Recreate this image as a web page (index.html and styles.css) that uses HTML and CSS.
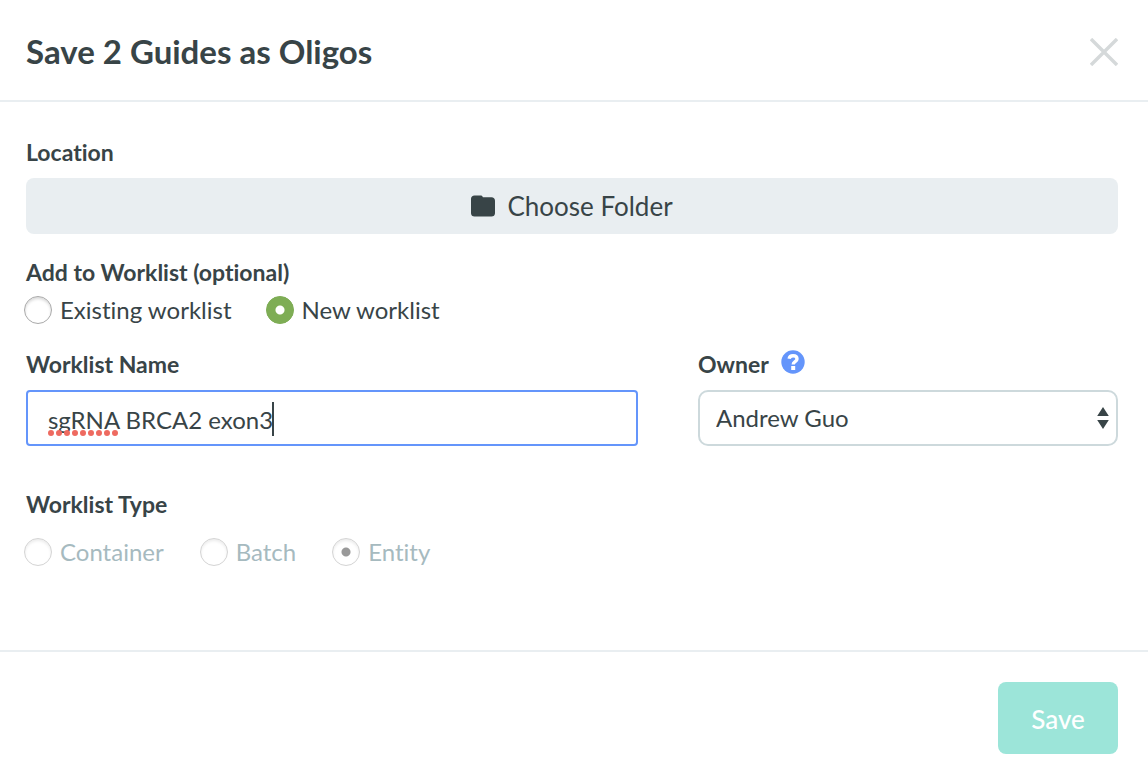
FILE: index.html
```html
<!DOCTYPE html>
<html lang="en">
<head>
<meta charset="utf-8">
<meta name="viewport" content="width=device-width, initial-scale=1">
<title>Save 2 Guides as Oligos</title>
<link rel="stylesheet" href="styles.css">
</head>
<body>
<form class="dialog">
  <header class="dialog-header">
    <h1 class="dialog-title">Save 2 Guides as Oligos</h1>
    <button class="close-button" type="button" aria-label="Close">
      <svg class="close-icon" viewBox="0 0 28 28" aria-hidden="true"><path d="M1 1 27 27M27 1 1 27" fill="none" stroke="#d5d9da" stroke-width="3.4"/></svg>
    </button>
  </header>
  <main class="dialog-body">
    <section class="location">
      <label class="label" for="folder">Location</label>
      <button class="folder-button" id="folder" type="button">
        <svg class="folder-icon" viewBox="0 0 24 22" aria-hidden="true"><path d="M3.500.5h6.200c1 0 1.800.6 2.200 1.800h8.600C22.600 2.300 24 3.700 24 5.800V18.200c0 2-1.400 3.300-3.500 3.300h-17C1.400 21.500 0 20.200 0 18.200V3.800C0 1.800 1.400.5 3.500.5Z" fill="#384447"/></svg>
        <span>Choose Folder</span>
      </button>
    </section>
    <fieldset class="group worklist">
      <legend class="label">Add to Worklist (optional)</legend>
      <div class="options options-wide">
        <label class="option"><input class="radio" type="radio" name="worklist"><span>Existing worklist</span></label>
        <label class="option"><input class="radio" type="radio" name="worklist" checked><span>New worklist</span></label>
      </div>
    </fieldset>
    <div class="fields">
      <div class="field">
        <label class="label" for="name">Worklist Name</label>
        <div class="name-box">
          <input class="control text-input" id="name" type="text" value="sgRNA BRCA2 exon3" spellcheck="false">
          <svg class="spelling" viewBox="0 0 70 6" aria-hidden="true"><path d="M3 3h65" stroke="#ee6a60" stroke-width="6" stroke-linecap="round" stroke-dasharray="0 8"/></svg>
          <span class="caret"></span>
        </div>
      </div>
      <div class="field">
        <div class="label-row">
          <label class="label" for="owner">Owner</label>
          <button class="help-button" type="button" aria-label="Help">
            <svg class="help-icon" viewBox="0 0 24 24" aria-hidden="true"><circle cx="12" cy="12" r="11.700" fill="#6495fb"/><path d="M8.100 8.800C8.500 6.700 10 5.800 12 5.800c2.300 0 4 1.100 4 3.100 0 2.900-3.800 2.500-3.800 5.500" fill="none" stroke="#fff" stroke-width="3.400"/><path d="M10.200 16h4v4h-4z" fill="#fff"/></svg>
          </button>
        </div>
        <div class="select-box">
          <select class="control select" id="owner"><option>Andrew Guo</option></select>
          <svg class="select-arrows" viewBox="0 0 12 22" aria-hidden="true"><path d="M6 0l5.800 9H.2zM6 22L.2 13h11.600z" fill="#384447"/></svg>
        </div>
      </div>
    </div>
    <fieldset class="group type" disabled>
      <legend class="label">Worklist Type</legend>
      <div class="options options-type">
        <label class="option"><input class="radio" type="radio" name="type"><span>Container</span></label>
        <label class="option"><input class="radio" type="radio" name="type"><span>Batch</span></label>
        <label class="option"><input class="radio" type="radio" name="type" checked><span>Entity</span></label>
      </div>
    </fieldset>
  </main>
  <footer class="dialog-footer">
    <button class="save-button" type="submit">Save</button>
  </footer>
</form>
</body>
</html>
```
FILE: styles.css
```css
* { box-sizing: border-box; }

body {
  margin: 0;
  background: #fff;
  color: #384447;
  font: 24px/28px Lato, "Open Sans", sans-serif;
  font-variant-ligatures: none;
}

button, input, select { font: inherit; color: inherit; font-variant-ligatures: none; }
button { border: 0; padding: 0; background: none; cursor: pointer; }
svg { display: block; }

.dialog-header {
  display: flex;
  align-items: center;
  justify-content: space-between;
  padding: 30px 30px 28px 26px;
  border-bottom: 2px solid #e9eef1;
}
.dialog-title { margin: 0; font-size: 33px; line-height: 42px; font-weight: 700; }
.close-button { padding-top: 2px; }
.close-icon { width: 28px; height: 28px; }

.dialog-body { padding: 36px 30px 84px 26px; }
.label { display: block; padding: 0; font-weight: 700; font-size: 23px; line-height: 28px; }

.folder-button {
  display: flex;
  align-items: center;
  justify-content: center;
  gap: 12px;
  width: 100%;
  height: 56px;
  margin-top: 12px;
  border-radius: 8px;
  background: #e9eef1;
  font-size: 26px;
}
.folder-icon { width: 24px; height: 22px; }

.group { margin: 0; padding: 0; border: 0; min-width: 0; }
.worklist { margin-top: 24px; }
.options { display: flex; margin-left: -2px; }
.options-wide { margin-top: 10px; gap: 34px; }
.options-type { margin-top: 20px; gap: 36px; }
.option { display: flex; align-items: center; gap: 8px; }

.radio {
  appearance: none;
  width: 28px;
  height: 28px;
  margin: 0;
  border: 1px solid #aaa;
  border-radius: 50%;
  background: #fff;
  box-shadow: inset 0 2px 3px #d9d9d9;
}
.radio:checked {
  border-color: #7ead55;
  background: #7ead55 radial-gradient(circle, #fff 4px, #7ead55 5px);
  box-shadow: none;
}
.type .option { color: #a6babf; }
.type .radio { border-color: #d4d4d4; box-shadow: inset 0 2px 3px #ececec; }
.type .radio:checked { background: radial-gradient(circle, #999 4px, #fff 5px); }

.fields {
  display: grid;
  grid-template-columns: 51fr 35fr;
  gap: 60px;
  margin-top: 26px;
}
.label-row { display: flex; gap: 12px; }
.help-icon { width: 24px; height: 24px; }
.help-button { align-self: flex-start; }
.name-box, .select-box { position: relative; margin-top: 12px; }
.control { display: block; width: 100%; height: 56px; background: #fff; outline: 0; }
.text-input { padding: 2px 20px 0; border: 2px solid #6495fb; border-radius: 4px; }
.select { appearance: none; padding: 0 16px; border: 2px solid #cdd9dc; border-radius: 10px; }
.spelling { position: absolute; left: 22px; top: 40px; width: 70px; height: 6px; }
.caret { position: absolute; left: 246px; top: 12px; width: 2px; height: 34px; background: #384447; }
.select-arrows { position: absolute; right: 9px; top: 17px; width: 12px; height: 22px; }

.type { margin-top: 44px; }

.dialog-footer {
  display: flex;
  justify-content: flex-end;
  padding: 30px 30px 20px;
  border-top: 2px solid #e9eef1;
}
.save-button {
  min-width: 120px;
  height: 72px;
  padding-top: 2px;
  border-radius: 8px;
  background: #9ce5d9;
  color: #fff;
  font-size: 26px;
  font-weight: 500;
}
```
